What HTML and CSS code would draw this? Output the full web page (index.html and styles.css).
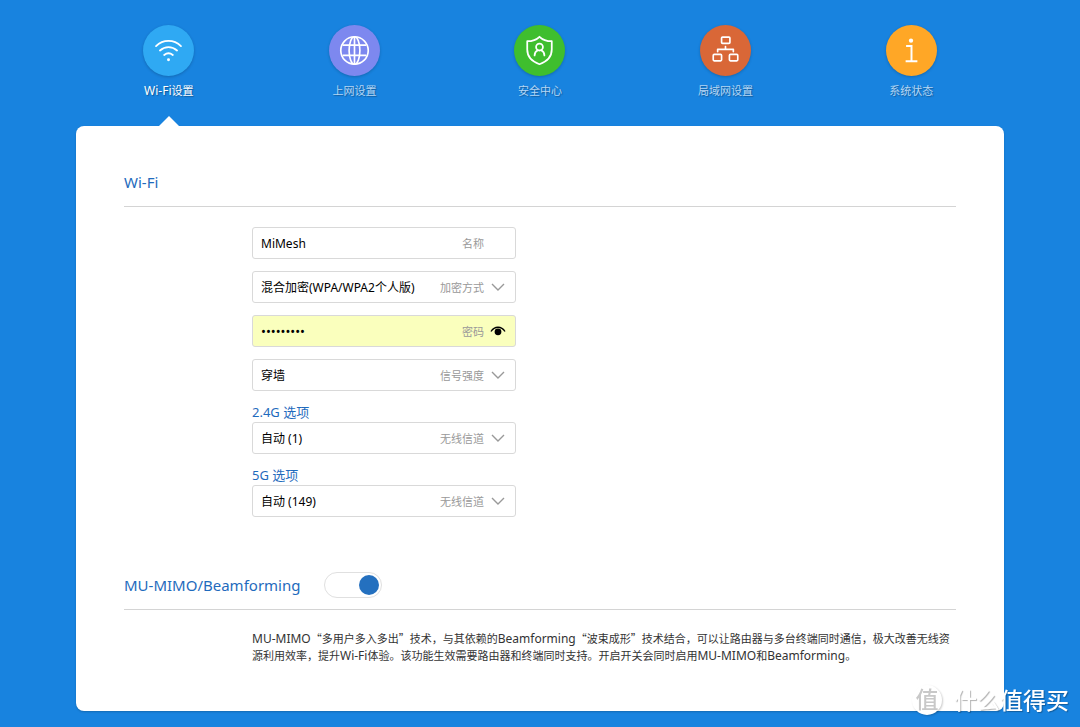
FILE: index.html
```html
<!DOCTYPE html>
<html lang="zh-CN">
<head>
<meta charset="utf-8">
<meta name="viewport" content="width=device-width, initial-scale=1">
<title>Wi-Fi设置</title>
<link rel="stylesheet" href="styles.css">
</head>
<body>
<div class="page">
  <nav class="nav">
    <a class="nav-item active" href="#wifi">
      <span class="nav-icon wifi">
        <svg viewBox="0 0 52 52" fill="none" stroke="#fff" stroke-width="1.9" stroke-linecap="round">
          <path d="M13.300 21.500C20.500 14.500 31.500 14.500 38.700 21.500M17.300 26C22.500 21.500 29.500 21.500 34.700 26M21.600 30.500C24.300 28.400 27.700 28.400 30.400 30.500"/>
          <circle cx="26" cy="35.500" r="1.500" fill="#fff" stroke="none"/>
        </svg>
      </span>
      <span class="nav-text"><span class="en">Wi-Fi</span>设置</span>
    </a>
    <a class="nav-item" href="#wan">
      <span class="nav-icon wan">
        <svg viewBox="0 0 52 52" fill="none" stroke="#fff" stroke-width="1.7">
          <circle cx="26" cy="26" r="14"/>
          <ellipse cx="26" cy="26" rx="5.500" ry="14"/>
          <path d="M26 12v28M14 20.500h24M14 31h24"/>
        </svg>
      </span>
      <span class="nav-text">上网设置</span>
    </a>
    <a class="nav-item" href="#security">
      <span class="nav-icon security">
        <svg viewBox="0 0 52 52" fill="none" stroke="#fff" stroke-width="1.8" stroke-linecap="round" stroke-linejoin="round">
          <path d="M26 12C23 15 18 16.500 13.500 16.500V25C13.500 32.500 19 37.500 26 40C33 37.500 38.500 32.500 38.500 25V16.500C34 16.500 29 15 26 12Z"/>
          <circle cx="26" cy="22.500" r="3.500"/>
          <path d="M21 31C21 28.500 22.500 26.500 24.300 25.700M31 31C31 28.500 29.500 26.500 27.700 25.700"/>
        </svg>
      </span>
      <span class="nav-text">安全中心</span>
    </a>
    <a class="nav-item" href="#lan">
      <span class="nav-icon lan">
        <svg viewBox="0 0 52 52" fill="none" stroke="#fff" stroke-width="1.7" stroke-linecap="round" stroke-linejoin="round">
          <rect x="22" y="12.300" width="8.500" height="6.500" rx="1"/>
          <rect x="13.500" y="30" width="8.500" height="6.500" rx="1"/>
          <rect x="30" y="30" width="8.500" height="6.500" rx="1"/>
          <path d="M26 22v2.800M18 27.300v-2.500h16v2.500"/>
        </svg>
      </span>
      <span class="nav-text">局域网设置</span>
    </a>
    <a class="nav-item" href="#status">
      <span class="nav-icon status">
        <svg viewBox="0 0 52 52" fill="none" stroke="#fff" stroke-width="2">
          <circle cx="25.500" cy="16" r="2.200" fill="#fff" stroke="none"/>
          <path d="M20.500 21.400H26V37M20 37h12"/>
        </svg>
      </span>
      <span class="nav-text">系统状态</span>
    </a>
  </nav>

  <main class="card">
    <section class="section">
      <header class="section-head"><h2 class="title">Wi-Fi</h2></header>
      <form class="form">
        <label class="field">
          <input class="control" type="text" value="MiMesh">
          <span class="hint">名称</span>
          <span class="slot"></span>
        </label>
        <label class="field">
          <select class="control"><option>混合加密(WPA/WPA2个人版)</option></select>
          <span class="hint">加密方式</span>
          <span class="slot"><svg class="chevron" viewBox="0 0 14 8"><path d="M1 1l6 6 6-6"/></svg></span>
        </label>
        <div class="field filled">
          <input class="control password" id="password" type="password" value="123456789">
          <label class="hint" for="password">密码</label>
          <button class="slot" type="button" aria-label="显示密码">
            <svg class="eye" viewBox="0 0 16 10"><path d="M1 5.500C4.500-.2 11.500-.2 15 5.500" fill="none" stroke="#000" stroke-width="1.300"/><circle cx="8" cy="5.800" r="3.400"/></svg>
          </button>
        </div>
        <label class="field">
          <select class="control"><option>穿墙</option></select>
          <span class="hint">信号强度</span>
          <span class="slot"><svg class="chevron" viewBox="0 0 14 8"><path d="M1 1l6 6 6-6"/></svg></span>
        </label>
        <div class="group">
          <h3 class="group-title">2.4G 选项</h3>
          <label class="field">
            <select class="control"><option>自动 (1)</option></select>
            <span class="hint">无线信道</span>
            <span class="slot"><svg class="chevron" viewBox="0 0 14 8"><path d="M1 1l6 6 6-6"/></svg></span>
          </label>
        </div>
        <div class="group">
          <h3 class="group-title">5G 选项</h3>
          <label class="field">
            <select class="control"><option>自动 (149)</option></select>
            <span class="hint">无线信道</span>
            <span class="slot"><svg class="chevron" viewBox="0 0 14 8"><path d="M1 1l6 6 6-6"/></svg></span>
          </label>
        </div>
      </form>
    </section>

    <section class="section">
      <header class="section-head">
        <h2 class="title"><label for="mimo">MU-MIMO/Beamforming</label></h2>
        <input class="switch" id="mimo" type="checkbox" checked>
      </header>
      <p class="desc"><span class="en">MU-MIMO</span>“多用户多入多出”技术，与其依赖的<span class="en">Beamforming</span>“波束成形”技术结合，可以让路由器与多台终端同时通信，极大改善无线资源利用效率，提升<span class="en">Wi-Fi</span>体验。该功能生效需要路由器和终端同时支持。开启开关会同时启用<span class="en">MU-MIMO</span>和<span class="en">Beamforming</span>。</p>
    </section>
  </main>
</div>
<div class="watermark"><span class="badge">值</span><span>什么值得买</span></div>
</body>
</html>
```
FILE: styles.css
```css
* {
  box-sizing: border-box;
}

body {
  margin: 0;
  min-height: 100vh;
  background: #1883df;
  color: #333;
  font: 11px/17px "Noto Sans", "Noto Sans CJK SC", sans-serif;
}

h2,
h3,
p {
  margin: 0;
  font-weight: 400;
}

.en {
  font-family: "Noto Sans", sans-serif;
  font-size: 12px;
  line-height: 1;
}

.page {
  padding: 25px 76px 16px;
}

.nav {
  display: grid;
  grid-template-columns: repeat(5, 1fr);
}

.nav-item {
  position: relative;
  display: flex;
  flex-direction: column;
  align-items: center;
  gap: 6px;
  height: 101px;
  color: #b4d6f4;
  text-decoration: none;
  text-shadow: 1px 1px 1px rgba(0, 0, 0, 0.3);
}

.nav-item.active {
  color: #fff;
}

.nav-item.active::after {
  content: "";
  position: absolute;
  bottom: 0;
  border: 10px solid transparent;
  border-top: 0;
  border-bottom-color: #fff;
}

.nav-icon {
  width: 51px;
  height: 51px;
  border-radius: 50%;
  box-shadow: 0 1px 3px rgba(0, 0, 0, 0.2);
}

.nav-icon svg {
  display: block;
}

.wifi { background: #2fa9f3; }
.wan { background: #7d88ef; }
.security { background: #3fbe2e; }
.lan { background: #d96737; }
.status { background: #ffa726; }

.card {
  display: flex;
  flex-direction: column;
  gap: 43px;
  padding: 31px 48px 47px;
  border-radius: 8px;
  background: #fff;
  box-shadow: 0 1px 2px rgba(0, 0, 0, 0.2);
}

.section-head {
  display: flex;
  align-items: center;
  gap: 24px;
  height: 50px;
  border-bottom: 1px solid #d4d4d4;
}

.title {
  color: #1f6bbd;
  font-size: 15px;
  line-height: 24px;
}

.form {
  display: flex;
  flex-direction: column;
  gap: 12px;
  width: 264px;
  margin: 20px 0 0 128px;
}

.field {
  display: flex;
  align-items: center;
  height: 32px;
  padding: 0 6px 0 8px;
  border: 1px solid #d9d9d9;
  border-radius: 3px;
  background: #fff;
}

.field.filled {
  background: #faffbd;
}

.control {
  flex: 1;
  min-width: 0;
  height: 30px;
  padding: 0;
  border: 0;
  outline: 0;
  appearance: none;
  background: transparent;
  color: #000;
  font: inherit;
  font-size: 12px;
}

.control.password {
  font-size: 13px;
}

.hint {
  color: #999;
}

.slot {
  display: flex;
  justify-content: center;
  align-items: center;
  width: 22px;
  height: 30px;
  margin-left: 3px;
  padding: 0;
  border: 0;
  background: none;
}

.chevron {
  width: 14px;
  height: 8px;
  fill: none;
  stroke: #999;
  stroke-width: 1.4;
}

.eye {
  width: 16px;
  height: 10px;
}

.group-title {
  color: #1f6bbd;
  font-size: 13px;
  line-height: 19px;
}

.switch {
  display: flex;
  justify-content: flex-end;
  align-items: center;
  width: 58px;
  height: 26px;
  margin: 0;
  padding: 0 2px;
  border: 1px solid #e0e0e0;
  border-radius: 13px;
  appearance: none;
  background: #fff;
}

.switch::before {
  content: "";
  width: 20px;
  height: 20px;
  border-radius: 50%;
  background: #2470bf;
}

.switch:not(:checked) {
  justify-content: flex-start;
}

.desc {
  margin: 20px 0 0 128px;
  font-family: "Noto Sans CJK SC", sans-serif;
}

.watermark {
  position: fixed;
  right: 11px;
  bottom: 11px;
  display: flex;
  align-items: center;
  gap: 12px;
  color: #fff;
  font-size: 23px;
  font-weight: 500;
  line-height: 32px;
  text-shadow: 1px 1px 1px rgba(0, 0, 0, 0.3);
}

.badge {
  width: 30px;
  height: 30px;
  border-radius: 50%;
  background: #fff;
  box-shadow: 1px 1px 2px rgba(0, 0, 0, 0.2);
  color: #c8c8c8;
  font-size: 23px;
  line-height: 28px;
  text-align: center;
  text-shadow: none;
}
```
